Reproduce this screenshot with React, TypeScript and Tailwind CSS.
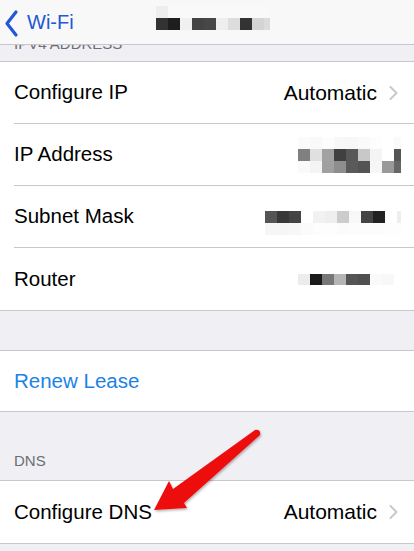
// pixelated placeholder: rows of grey cells, 12px wide each
function Pixels({ rows, h = 12, w }: { rows: string[][]; h?: number; w: number }) {
  return <div className="flex flex-col overflow-hidden" style={{ width: w }}>
    {rows.map((r, i) => <div key={i} className="flex">
      {r.map((c, j) => <div key={j} className="w-[12px] shrink-0" style={{ height: h, background: c }} />)}
    </div>)}
  </div>
}

const ipCells = [
  ['#fbfbfb', '#f9f9f9', '#fdfdfd', '#f8f8f8', '#f7f7f7', '#fafafa', '#fdfdfd', '#fff', '#fafafa'],
  ['#808080', '#e0e0e0', '#a2a2a2', '#404040', '#585858', '#c8c8c8', '#f4f4f4', '#ffffff', '#555555'],
  ['#fafafa', '#f4f4f4', '#a0a0a0', '#8e8e8e', '#5a5a5a', '#545454', '#f6f6f6', '#999999', '#666666'],
]
const subnetCells = [
  ['#555555', '#383838', '#444444', '#ffffff', '#f2f2f2', '#eeeeee', '#cccccc', '#f8f8f8', '#444444', '#222222', '#ffffff', '#eeeeee'],
  ['#f6f6f6', '#f6f6f6', '#f7f7f7', '#fbfbfb', '#fdfdfd', '#fdfdfd', '#fbfbfb', '#fcfcfc', '#fcfcfc', '#fcfcfc', '#fdfdfd', '#fdfdfd'],
]
const routerCells = [
  ['#ececec', '#1a1a1a', '#777777', '#b5b5b5', '#555555', '#505050', '#fafafa', '#f8f8f8'],
]
const titleCells = [
  ['#eeeeee', '#f9f9f9', '#f9f9f9', '#f9f9f9', '#f9f9f9', '#f9f9f9', '#f9f9f9', '#f9f9f9', '#f9f9f9', '#f9f9f9'],
  ['#333333', '#1e1e1e', '#f0f0f0', '#444444', '#474747', '#eeeeee', '#dddddd', '#333333', '#d4d4d4', '#dcdcdc'],
]

function Chevron() {
  return <svg width="9" height="14" viewBox="0 0 9 14" className="ml-[12px]">
    <polyline points="1.5,1 7.5,7 1.5,13" fill="none" stroke="#c7c7cc" strokeWidth="2" strokeLinecap="round" strokeLinejoin="round" />
  </svg>
}

function Row({ label, value, chevron, last, children }: { label: string; value?: string; chevron?: boolean; last?: boolean; children?: React.ReactNode }) {
  return <div className="pl-[14px] bg-white">
    <div className={`h-[62px] flex items-center ${chevron ? 'pr-[16px]' : 'pr-[13px]'} ${last ? '' : 'border-b border-[#c8c7cc]'}`}>
      <span className="text-[20.5px] text-black">{label}</span>
      <div className="ml-auto flex items-center">
        {value && <span className="text-[21px] text-black">{value}</span>}
        {children}
        {chevron && <Chevron />}
      </div>
    </div>
  </div>
}

export default function App() {
  return <div className="relative w-[414px] h-[551px] overflow-hidden bg-[#efeff4]" style={{ fontFamily: '"Liberation Sans", Arial, sans-serif' }}>
    {/* nav bar sits above the scrolled list */}
    <div className="absolute top-0 left-0 right-0 h-[45px] z-10 bg-[#f8f8f8] border-b border-[#c8c7cc] flex items-center">
      <svg width="22" height="36" viewBox="0 0 22 36" className="ml-[1px]">
        <polyline points="15,8 6,19.5 15,31" fill="none" stroke="#2357d4" strokeWidth="3.2" strokeLinecap="round" strokeLinejoin="round" />
      </svg>
      <span className="ml-[4px] text-[20px] text-[#2357d4]">Wi-Fi</span>
      <div className="absolute left-[156px] top-[6px]">
        <Pixels rows={titleCells} w={114} />
      </div>
    </div>

    <div className="h-[61px] flex items-end px-[14px] pb-[8px]">
      <span className="text-[15px] text-[#6d6d72] leading-[18px]">IPV4 ADDRESS</span>
    </div>

    <div className="border-y border-[#c8c7cc]">
      <Row label="Configure IP" value="Automatic" chevron />
      <Row label="IP Address">
        <Pixels rows={ipCells} w={103} />
      </Row>
      <Row label="Subnet Mask">
        <div className="mt-[12px]"><Pixels rows={subnetCells} w={136} /></div>
      </Row>
      <Row label="Router" last>
        <div className="mr-[7px]"><Pixels rows={routerCells} h={11} w={96} /></div>
      </Row>
    </div>

    <div className="h-[39px]" />

    <div className="border-y border-[#c8c7cc] bg-white pl-[14px] h-[62px] flex items-center">
      <span className="text-[20.5px] text-[#1b82e6]">Renew Lease</span>
    </div>

    <div className="h-[68px] flex items-end px-[14px] pb-[10px]">
      <span className="text-[15px] text-[#6d6d72] leading-[18px]">DNS</span>
    </div>

    <div className="border-y border-[#c8c7cc]">
      <Row label="Configure DNS" value="Automatic" chevron last />
    </div>

    <svg className="absolute inset-0 pointer-events-none" width="414" height="551" viewBox="0 0 414 551">
      <defs>
        <filter id="sh" x="-20%" y="-20%" width="140%" height="140%">
          <feDropShadow dx="1" dy="1.5" stdDeviation="1.2" floodColor="#000" floodOpacity="0.3" />
        </filter>
      </defs>
      <path d="M154 510 L169 481 L173 489 L255 430 Q261 429 260 435 L184 503 L187 508 Z" fill="#ee1111" filter="url(#sh)" />
    </svg>
  </div>
}
